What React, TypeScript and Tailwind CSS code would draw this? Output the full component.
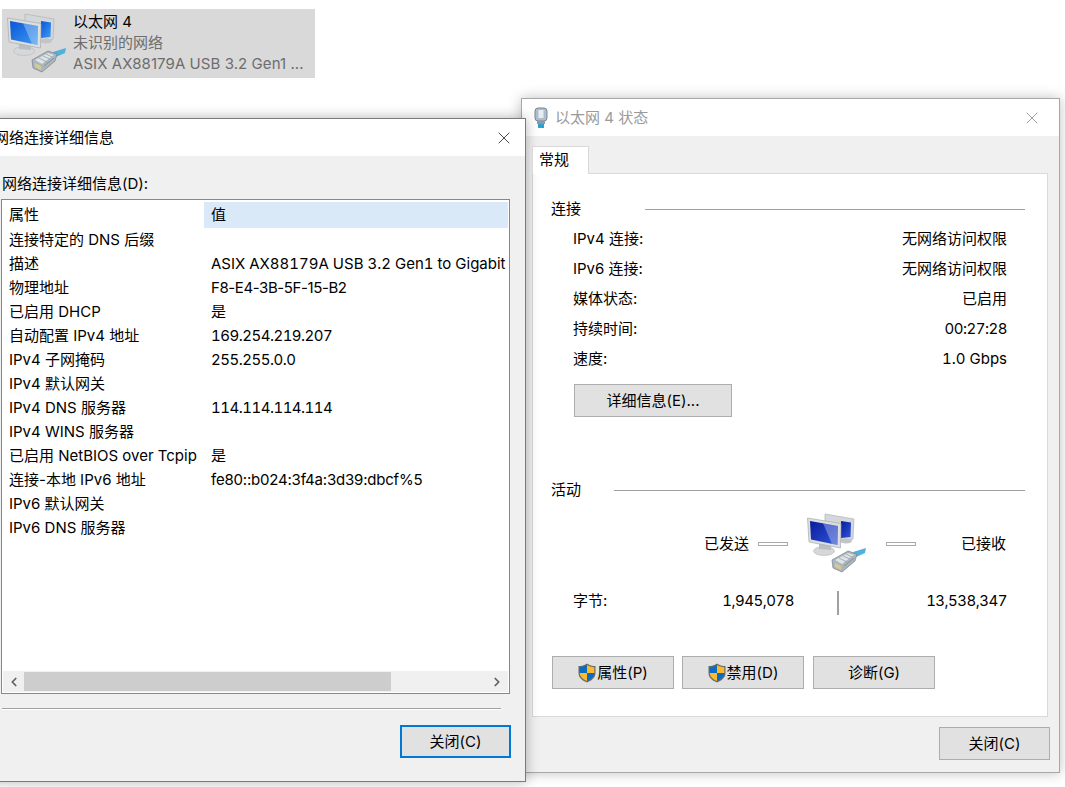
import { X, ChevronLeft, ChevronRight } from "lucide-react";

// 세 번째 값은 값 글자폭 보정용 클래스
const DETAILS: [string, string, string?][] = [
  ["连接特定的 DNS 后缀", ""],
  ["描述", "ASIX AX88179A USB 3.2 Gen1 to Gigabit", "tabular-nums"],
  ["物理地址", "F8-E4-3B-5F-15-B2", "tracking-[-0.4px]"],
  ["已启用 DHCP", "是"],
  ["自动配置 IPv4 地址", "169.254.219.207", "tabular-nums tracking-[-0.5px]"],
  ["IPv4 子网掩码", "255.255.0.0", "tabular-nums tracking-[-0.5px]"],
  ["IPv4 默认网关", ""],
  ["IPv4 DNS 服务器", "114.114.114.114", "tabular-nums tracking-[-0.5px]"],
  ["IPv4 WINS 服务器", ""],
  ["已启用 NetBIOS over Tcpip", "是"],
  ["连接-本地 IPv6 地址", "fe80::b024:3f4a:3d39:dbcf%5", "tracking-[-0.2px]"],
  ["IPv6 默认网关", ""],
  ["IPv6 DNS 服务器", ""],
];

const STATUS: [string, string, string?][] = [
  ["IPv4 连接:", "无网络访问权限"],
  ["IPv6 连接:", "无网络访问权限"],
  ["媒体状态:", "已启用"],
  ["持续时间:", "00:27:28", "tabular-nums tracking-[-0.5px]"],
  ["速度:", "1.0 Gbps", "tabular-nums"],
];

// 모니터 두 대 + 랜 커넥터 아이콘
function NetworkIcon({ dark }: { dark?: boolean }) {
  const id = dark ? "scr-dark" : "scr-light";
  const from = dark ? "#0a1a9c" : "#0a55d8";
  const to = dark ? "#2f57d8" : "#3f9cf0";
  return (
    <svg width="66" height="64" viewBox="0 0 66 64">
      <defs>
        <linearGradient id={id} x1="0" y1="0" x2="1" y2="1">
          <stop offset="0" stopColor={from} />
          <stop offset="1" stopColor={to} />
        </linearGradient>
      </defs>
      <path d="M21 4 L50 9 L49 29 L40 32 L36 30 L21 12 Z" fill="#d4d7d9" stroke="#b0b3b5" strokeWidth="0.7" />
      <path d="M37 11 L47 12.5 L46.5 27 L37 28 Z" fill={`url(#${id})`} />
      <ellipse cx="42" cy="31" rx="6" ry="2.5" fill="#c2c5c7" />
      <ellipse cx="20" cy="41" rx="10.5" ry="4.5" fill="#d5d7d8" stroke="#b5b8ba" strokeWidth="0.6" />
      <path d="M15 32 L27 34 L27 40 L15 39 Z" fill="#bcbfc1" />
      <path d="M3.5 8 L37 13.5 L36.5 38 L5 32 Z" fill="#dcdee0" stroke="#a8acae" strokeWidth="0.7" />
      <path d="M6 11 L34 16 L33.5 35 L7 29.5 Z" fill={`url(#${id})`} />
      <path d="M19 13.3 L34 16 L33.5 35 L28 34 Z" fill="#ffffff" opacity="0.3" />
      <path d="M49 42 L62 38 L61 43 L52 47 Z" fill="#4fb2dc" />
      <path d="M28 50 L44 41 L53 44 L51 51 L38 62 L29 58 Z" fill="#aab5bd" stroke="#76828a" strokeWidth="0.7" />
      <path d="M31 50 L44 43 L50 45 L38 54 Z" fill="#dfe4e8" />
      <path d="M35 48 L43 52 M39 46 L46 49 M42 44 L48 47" stroke="#8b979f" strokeWidth="0.7" />
      <path d="M31 53 L37 56 L37 60 L31 57 Z" fill="#d9c98f" />
      <path d="M40 56 L50 48" stroke="#77838b" strokeWidth="0.7" />
    </svg>
  );
}

function ShieldIcon() {
  return (
    <svg width="18" height="20" viewBox="0 0 18 20" className="shrink-0 mr-[1px]">
      <path d="M9 0.5 C12 2.5 14 3 17.5 3 V10 C17.5 15 13 18 9 19.5 C5 18 0.5 15 0.5 10 V3 C4 3 6 2.5 9 0.5 Z" fill="#6b6b6b" />
      <path d="M9 2 V10 H1.7 V4.2 C4.5 4.1 6.8 3.4 9 2 Z" fill="#0b6cc4" />
      <path d="M9 2 C11.2 3.4 13.5 4.1 16.3 4.2 V10 H9 Z" fill="#fdb92c" />
      <path d="M1.7 10 H9 V18 C5.5 16.7 2 14.3 1.7 10 Z" fill="#fdb92c" />
      <path d="M9 10 H16.3 C16 14.3 12.5 16.7 9 18 Z" fill="#0b6cc4" />
    </svg>
  );
}

function DetailsWindow() {
  return (
    <div className="absolute left-[-10px] top-[118px] w-[536px] h-[664px] flex flex-col bg-[#f0f0f0] border border-[#7a7a7a] shadow-[0_0_12px_rgba(0,0,0,0.3)]">
      <div className="h-[37px] bg-white flex items-center justify-between pl-[3px] pr-[11px] shrink-0">
        <span>网络连接详细信息</span>
        <X size={20} strokeWidth={1} className="text-[#222]" />
      </div>
      <div className="h-[41px] flex items-end pl-[11px] pb-[3px] shrink-0">网络连接详细信息(D):</div>
      <div className="mt-[2px] ml-[10px] w-[509px] h-[495px] border border-[#828790] bg-white flex flex-col shrink-0">
        <div className="flex-1 overflow-hidden pl-[1px] pr-[1px] pt-[2px]">
          <div className="flex h-[26px] items-center">
            <div className="w-[201px] pl-[6px]">属性</div>
            <div className="flex-1 self-stretch flex items-center bg-[#d9e9f7] pl-[7px]">值</div>
          </div>
          {DETAILS.map(([k, v, cls]) => (
            <div key={k} className="flex h-[24px] items-center whitespace-nowrap">
              <div className="w-[201px] pl-[6px]">{k}</div>
              <div className={`pl-[7px] ${cls ?? ""}`}>{v}</div>
            </div>
          ))}
        </div>
        <div className="h-[21px] mb-[1px] mx-[1px] bg-[#f0f0f0] flex items-center justify-between shrink-0">
          <ChevronLeft size={14} strokeWidth={3} className="ml-[4px] text-[#606060]" />
          <div className="ml-[3px] w-[367px] h-[19px] bg-[#cdcdcd]" />
          <div className="flex-1" />
          <ChevronRight size={14} strokeWidth={3} className="mr-[4px] text-[#606060]" />
        </div>
      </div>
      <div className="ml-[11px] w-[499px] mt-[14px] border-t border-[#a0a0a0] border-b-white border-b h-[2px] shrink-0" />
      <div className="flex justify-end mt-[15px] pr-[14px]">
        <button className="w-[111px] h-[33px] bg-[#e1e1e1] border-2 border-[#0078d7]">关闭(C)</button>
      </div>
    </div>
  );
}

function ActionButton({ label, shield }: { label: string; shield?: boolean }) {
  return (
    <button className="w-[122px] h-[33px] bg-[#e1e1e1] border border-[#adadad] flex items-center justify-center">
      {shield && <ShieldIcon />}
      <span>{label}</span>
    </button>
  );
}

function StatusWindow() {
  return (
    <div className="absolute left-[521px] top-[98px] w-[539px] h-[675px] flex flex-col bg-[#f0f0f0] border border-[#a8a8a8] shadow-[0_0_12px_rgba(0,0,0,0.25)]">
      <div className="h-[37px] bg-white flex items-center justify-between pl-[11px] pr-[17px] shrink-0">
        <div className="flex items-center gap-[6px] text-[#9a9a9a]">
          <svg width="16" height="22" viewBox="0 0 16 22">
            <rect x="2" y="1" width="12" height="13" rx="3" fill="#aebdca" stroke="#7b8793" />
            <rect x="5.5" y="3" width="5" height="8" fill="#e6ecf1" />
            <rect x="4" y="14" width="8" height="3" fill="#8a9aa8" />
            <rect x="5" y="17" width="6" height="4" fill="#2f9fd0" />
          </svg>
          <span>以太网 4 状态</span>
        </div>
        <X size={20} strokeWidth={1} className="text-[#8a8a8a]" />
      </div>
      <div className="flex-1 px-[10px] pt-[10px] flex flex-col">
        <div className="w-[57px] h-[28px] pl-[6px] pb-[2px] bg-white border border-b-0 border-[#d9d9d9] flex items-center relative z-10 mb-[-1px]">常规</div>
        <div className="w-[516px] h-[544px] bg-white border border-[#d9d9d9] px-[18px] pt-[25px] shrink-0 flex flex-col">
          <div className="flex items-center gap-[64px] h-[20px]">
            <span>连接</span>
            <div className="w-[380px] h-px bg-[#a0a0a0]" />
          </div>
          <div className="mt-[5px] flex flex-col pl-[22px] pr-[22px]">
            {STATUS.map(([k, v, cls]) => (
              <div key={k} className="flex justify-between items-center h-[30px]">
                <span>{k}</span>
                <span className={cls}>{v}</span>
              </div>
            ))}
          </div>
          <button className="ml-[23px] mt-[10px] w-[158px] h-[33px] bg-[#e1e1e1] border border-[#adadad] shrink-0">详细信息(E)...</button>
          <div className="flex items-center gap-[33px] h-[20px] mt-[63px]">
            <span>活动</span>
            <div className="w-[411px] h-px bg-[#a0a0a0]" />
          </div>
          <div className="flex items-center mt-[10px] h-[64px]">
            <span className="ml-[153px] w-[45px] mt-[4px]">已发送</span>
            <div className="w-[30px] h-[4px] border border-[#a8a8a8] ml-[9px] mt-[4px]" />
            <div className="ml-[16px]"><NetworkIcon dark /></div>
            <div className="w-[30px] h-[4px] border border-[#a8a8a8] ml-[16px] mt-[4px]" />
            <span className="ml-[45px] mt-[4px]">已接收</span>
          </div>
          <div className="flex items-center mt-[14px] h-[26px] pl-[22px] pr-[22px]">
            <span className="w-[50px] whitespace-nowrap">字节:</span>
            <span className="w-[171px] text-right tabular-nums tracking-[-0.5px]">1,945,078</span>
            <div className="w-[2px] h-[24px] bg-[#a0a0a0] ml-[43px] mt-[4px]" />
            <span className="flex-1 text-right tabular-nums tracking-[-0.5px]">13,538,347</span>
          </div>
          <div className="flex gap-[8px] mt-[42px] ml-[1px]">
            <ActionButton label="属性(P)" shield />
            <ActionButton label="禁用(D)" shield />
            <div className="ml-[1px]"><ActionButton label="诊断(G)" /></div>
          </div>
        </div>
        <div className="flex justify-end mt-[10px] mr-[-1px]">
          <button className="w-[111px] h-[33px] bg-[#e1e1e1] border border-[#adadad]">关闭(C)</button>
        </div>
      </div>
    </div>
  );
}

export default function App() {
  return (
    <div className="relative w-[1065px] h-[787px] overflow-hidden bg-white text-[15px] leading-[20px] text-black font-['Inter','Noto_Sans_CJK_SC',sans-serif]">
      <div className="absolute left-[2px] top-[9px] w-[313px] h-[69px] bg-[#d9d9d9] flex">
        <div className="ml-[2px] mt-[1px] w-[66px] shrink-0"><NetworkIcon /></div>
        <div className="ml-[3px] mt-[3px] whitespace-nowrap">
          <div className="h-[21px]">以太网 4</div>
          <div className="h-[21px] text-[#6d6d6d]">未识别的网络</div>
          <div className="h-[21px] text-[#6d6d6d] tracking-[0.07px]">ASIX AX88179A USB 3.2 Gen1 ...</div>
        </div>
      </div>
      <StatusWindow />
      <DetailsWindow />
    </div>
  );
}
